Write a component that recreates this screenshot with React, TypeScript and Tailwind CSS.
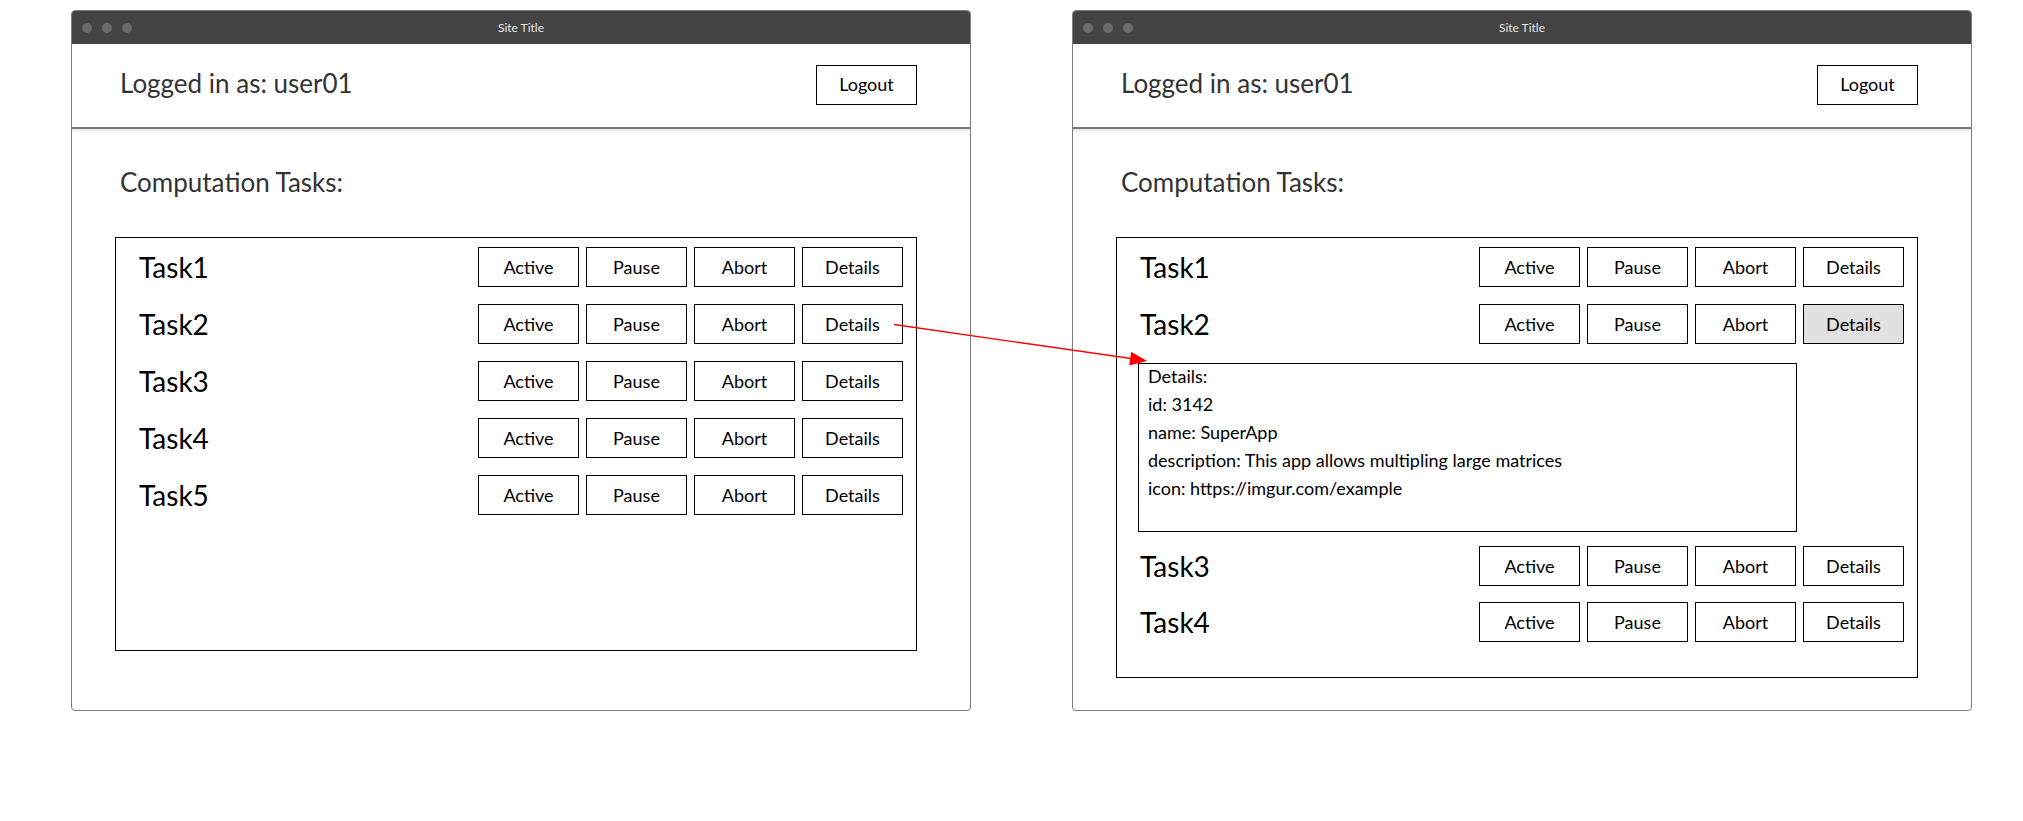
import React from "react";

type Row = { name: string; pressed?: boolean };

const actions = ["Active", "Pause", "Abort", "Details"];

function Btn({ label, pressed }: { label: string; pressed?: boolean }) {
  return (
    <div
      className={`w-[101px] h-[40px] border border-black flex items-center justify-center text-[18px] text-black ${
        pressed ? "bg-[#e1e1e1]" : "bg-white"
      }`}
    >
      {label}
    </div>
  );
}

function TaskRow({ name, pressed }: Row) {
  return (
    <div className="flex items-center justify-between h-[40px]">
      <span className="text-[28px] leading-none text-black">{name}</span>
      <div className="flex gap-[7px]">
        {actions.map((a) => (
          <Btn key={a} label={a} pressed={pressed && a === "Details"} />
        ))}
      </div>
    </div>
  );
}

function DetailsPanel() {
  return (
    <div className="-ml-[2px] mt-[19px] w-[659px] h-[169px] border border-black">
      <div className="pl-[9px] -mt-[2px] text-[18px] leading-[28px] text-black">
        <div>Details:</div>
        <div>id: 3142</div>
        <div>name: SuperApp</div>
        <div>description: This app allows multipling large matrices</div>
        <div>icon: https://imgur.com/example</div>
      </div>
    </div>
  );
}

function Window({ children, boxHeight }: { children: React.ReactNode; boxHeight: string }) {
  return (
    <div className="w-[900px] h-[701px] border border-[#7d7d7d] rounded-[4px] overflow-hidden bg-white flex flex-col">
      {/* title bar */}
      <div className="h-[33px] bg-[#444444] grid grid-cols-[1fr_auto_1fr] items-center px-[10px]">
        <div className="flex gap-[10px]">
          <span className="w-[10px] h-[10px] rounded-full bg-[#6b6b6b]" />
          <span className="w-[10px] h-[10px] rounded-full bg-[#6b6b6b]" />
          <span className="w-[10px] h-[10px] rounded-full bg-[#6b6b6b]" />
        </div>
        <span className="text-[12px] text-[#e4e4e4]">Site Title</span>
        <div />
      </div>

      {/* header */}
      <div className="h-[83px] flex items-center justify-between pl-[48px] pr-[53px] pb-[6px]">
        <span className="text-[26px] leading-[32px] text-[#333333]">Logged in as: user01</span>
        <div className="w-[101px] h-[40px] mt-[4px] border border-black flex items-center justify-center text-[18px] text-black">
          Logout
        </div>
      </div>
      <div className="h-[2px] bg-[#7a7a7a] shadow-[0_2px_2px_rgba(0,0,0,0.12)]" />

      {/* content */}
      <div className="pt-[37px] pl-[48px]">
        <div className="text-[26px] leading-[32px] text-[#333333]">Computation Tasks:</div>
      </div>
      <div className="pl-[43px] pr-[53px] mt-[39px]">
        <div className={`${boxHeight} border border-black pt-[9px] pl-[23px] pr-[13px] flex flex-col`}>
          {children}
        </div>
      </div>
    </div>
  );
}

export default function App() {
  return (
    <div className="w-[2023px] h-[821px] bg-white relative font-['Lato',sans-serif]">
      <div className="flex gap-[101px] pl-[71px] pt-[10px]">
        <Window boxHeight="h-[414px]">
          <div className="flex flex-col gap-[17px]">
            {["Task1", "Task2", "Task3", "Task4", "Task5"].map((t) => (
              <TaskRow key={t} name={t} />
            ))}
          </div>
        </Window>

        <Window boxHeight="h-[441px]">
          <div className="flex flex-col gap-[17px]">
            <TaskRow name="Task1" />
            <TaskRow name="Task2" pressed />
          </div>
          <DetailsPanel />
          <div className="flex flex-col gap-[16px] mt-[14px]">
            <TaskRow name="Task3" />
            <TaskRow name="Task4" />
          </div>
        </Window>
      </div>

      {/* connector arrow */}
      <svg className="absolute inset-0 pointer-events-none" width="2023" height="821">
        <line x1="894" y1="324.5" x2="1131" y2="358.5" stroke="#ff0000" strokeWidth="1.3" />
        <polygon points="1147,361 1131.2,351.7 1129.2,365.5" fill="#ff0000" />
      </svg>
    </div>
  );
}
